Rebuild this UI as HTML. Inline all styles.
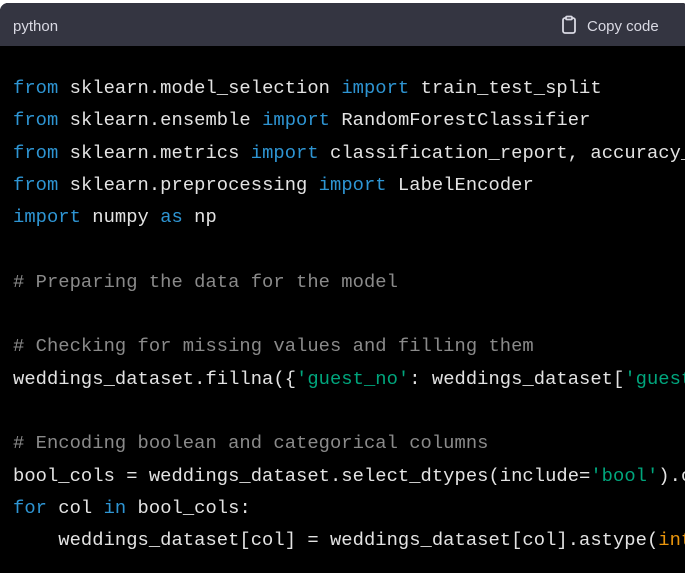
<!DOCTYPE html>
<html><head><style>
body{margin:0;width:685px;height:562px;background:#fff;overflow:hidden}
.box{position:absolute;left:0;top:3px;width:690px;height:570px;background:#000;border-radius:8px 8px 0 0;overflow:hidden}
.hd{height:43px;background:#343541;color:#d9d9e3;font:15px "Liberation Sans",sans-serif;position:relative}
.hd .l{position:absolute;left:13px;top:15px}
.hd .r{position:absolute;left:563px;top:15px}
.hd svg{position:absolute;left:-2px;top:0}
pre{margin:0;position:absolute;left:13px;top:69px;font:18.8px/32.3px "Liberation Mono",monospace;color:#e3e3e3;letter-spacing:0.05px}
.k{color:#2e95d3}.s{color:#00a67d}.c{color:#8a8a8a}.o{color:#e9950c}
</style></head><body>
<div class="box">
<div class="hd"><span class="l">python</span>
<svg width="18" height="20" style="left:560px;top:12px" viewBox="0 0 18 20" fill="none" stroke="#d9d9e3" stroke-width="1.8"><rect x="3" y="3" width="12" height="15" rx="2"/><rect x="6" y="1.5" width="6" height="3" rx="1" fill="#343541"/></svg>
<span class="r" style="left:587px">Copy code</span></div>
<pre><span class="k">from</span> sklearn.model_selection <span class="k">import</span> train_test_split
<span class="k">from</span> sklearn.ensemble <span class="k">import</span> RandomForestClassifier
<span class="k">from</span> sklearn.metrics <span class="k">import</span> classification_report, accuracy_score
<span class="k">from</span> sklearn.preprocessing <span class="k">import</span> LabelEncoder
<span class="k">import</span> numpy <span class="k">as</span> np

<span class="c"># Preparing the data for the model</span>

<span class="c"># Checking for missing values and filling them</span>
weddings_dataset.fillna({<span class="s">'guest_no'</span>: weddings_dataset[<span class="s">'guest_no'</span>]

<span class="c"># Encoding boolean and categorical columns</span>
bool_cols = weddings_dataset.select_dtypes(include=<span class="s">'bool'</span>).columns
<span class="k">for</span> col <span class="k">in</span> bool_cols:
    weddings_dataset[col] = weddings_dataset[col].astype(<span class="o">int</span>)
</pre>
</div>
</body></html>
